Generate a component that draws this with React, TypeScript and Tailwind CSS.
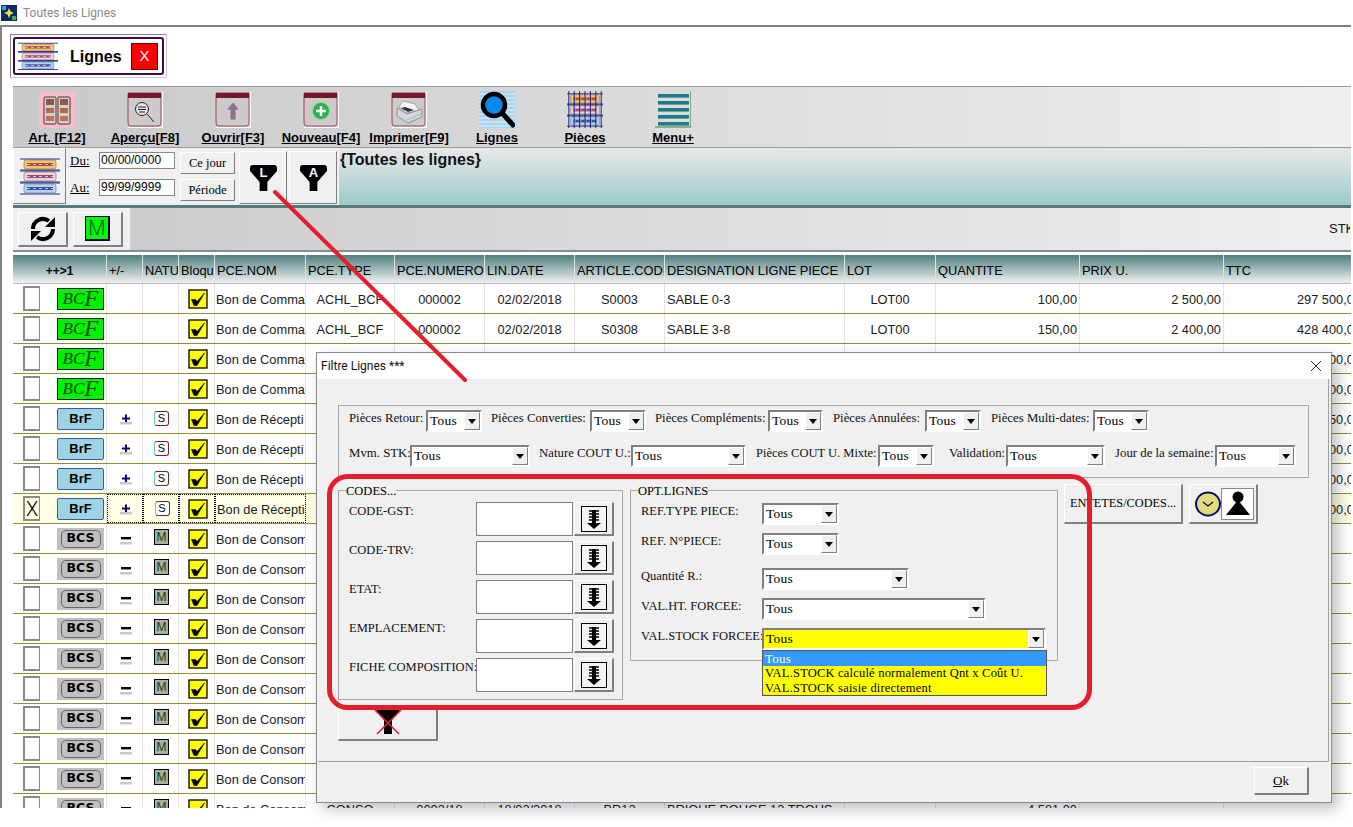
import React from "react";

const raised = "border border-t-white border-l-white border-b-[#808080] border-r-[#808080]";
const sunken = "border-2 border-t-[#808080] border-l-[#808080] border-b-white border-r-white";

function Bars({ w = 40, h = 40, grid = false }: { w?: number; h?: number; grid?: boolean }) {
  const rows = [
    { y: 4, a: "#f6c75a", b: "#a8455a" },
    { y: 16, a: "#f3d2c9", b: "#8f4a86" },
    { y: 28, a: "#a9d8ee", b: "#4a45a5" },
  ];
  return (
    <svg width={w} height={h} viewBox="0 0 40 40" preserveAspectRatio="none">
      {rows.map((r) => (
        <g key={r.y}>
          <rect x="4" y={r.y} width="32" height="9" rx="2" fill={r.a} stroke="#6a6a8a" strokeWidth="0.6" />
          <rect x="7" y={r.y + 3} width="26" height="3" fill={r.b} />
          <line x1="7" x2="33" y1={r.y + 4.5} y2={r.y + 4.5} stroke="#f4e8e8" strokeWidth="0.8" strokeDasharray="3 3" />
          <line x1="0" x2="40" y1={r.y - 1} y2={r.y - 1} stroke="#15157a" strokeWidth="0.9" />
          <line x1="0" x2="40" y1={r.y + 10} y2={r.y + 10} stroke="#15157a" strokeWidth="0.9" />
        </g>
      ))}
      {grid && [2, 8, 14, 20, 26, 32, 38].map((x) => <line key={x} x1={x} x2={x} y1="0" y2="40" stroke="#15157a" strokeWidth="1" />)}
    </svg>
  );
}

function Card({ children }: { children: React.ReactNode }) {
  return (
    <svg width="36" height="36" viewBox="0 0 36 36">
      <path d="M1 1H34V31Q34 34 31 34H4Q1 34 1 31Z" fill="#cfcaca" stroke="#8a2a3a" strokeWidth="0.8" />
      <rect x="1" y="1" width="33" height="5" fill="#701a2c" />
      <path d="M35.5 0V35.5H1" fill="none" stroke="#fff" strokeWidth="1.2" />
      {children}
    </svg>
  );
}

function ArtIcon() {
  return (
    <svg width="36" height="36" viewBox="0 0 36 36">
      <rect width="36" height="36" fill="#f9bccb" />
      {[5, 19].map((x) => (
        <g key={x}>
          <rect x={x} y="5" width="12" height="27" rx="1" fill="#d8d0c8" stroke="#4a3040" strokeWidth="1" />
          <rect x={x + 2} y="7" width="8" height="6" fill="#8a5a50" />
          <rect x={x + 2} y="16" width="8" height="5" fill="#b06a50" />
          <rect x={x + 2} y="24" width="8" height="5" fill="#c0705a" />
        </g>
      ))}
    </svg>
  );
}

function Tool({ label, children }: { label: string; children: React.ReactNode }) {
  return (
    <div className="flex w-[88px] shrink-0 flex-col items-center pt-[4px]">
      <div className="flex h-[37px] w-[37px] items-center justify-center">{children}</div>
      <div className="mt-[2px] whitespace-nowrap text-[13px] leading-[15px] font-bold text-black underline">{label}</div>
    </div>
  );
}

function Funnel({ letter }: { letter: string }) {
  return (
    <svg width="27" height="26" viewBox="0 0 28 26" preserveAspectRatio="none">
      <path d="M3 0H25Q28 0 28 3V6L18 17V26H10V17L0 6V3Q0 0 3 0Z" fill="#000" />
      <text x="14" y="12" textAnchor="middle" fontSize="13.5" fontWeight="bold" fill="#fff" fontFamily="Liberation Sans">{letter}</text>
    </svg>
  );
}

function Combo({ className, value = "Tous", yellow = false }: { className: string; value?: string; yellow?: boolean }) {
  return (
    <div className={`flex h-[22px] shrink-0 items-center ${sunken} ${yellow ? "bg-[#ffff00]" : "bg-white"} ${className}`}>
      <span className="flex-1 pl-[2px] text-[13.5px] leading-[18px] tracking-[0.2px] text-black">{value}</span>
      <span className={`flex h-[18px] w-[16px] items-center justify-center bg-[#f0f0f0] ${raised}`}>
        <svg width="8" height="5" viewBox="0 0 8 5"><path d="M0 0H8L4 5Z" fill="#000" /></svg>
      </span>
    </div>
  );
}

function Lbl({ className, size = "text-[12.5px]", children }: { className: string; size?: string; children: React.ReactNode }) {
  return <div className={`-mt-[1px] shrink-0 whitespace-nowrap leading-[18px] text-[#111] ${size} ${className}`}>{children}</div>;
}

function CodeRow({ label }: { label: string }) {
  return (
    <div className="flex h-[39px] items-start">
      <div className="w-[127px] shrink-0 pt-[1px]"><Lbl className="">{label}</Lbl></div>
      <div className="h-[34px] w-[97px] border border-[#808080] bg-white" />
      <button className={`ml-[1px] flex h-[34px] w-[40px] items-center justify-center bg-[#f0f0f0] border-b-2 border-r-2 ${raised}`}>
        <svg width="26" height="26" viewBox="0 0 26 26">
          <rect x="0.5" y="0.5" width="25" height="25" fill="#f4f4f4" stroke="#000" />
          <path d="M8 5H18M8 8H18M8 11H18M8 14H18" stroke="#000" strokeWidth="1.5" />
          <path d="M11 4H15V17H20L13 23L6 17H11Z" fill="#000" />
        </svg>
      </button>
    </div>
  );
}

function Badge({ type }: { type: string }) {
  if (type === "bcf")
    return (
      <div className="flex h-[22px] w-[47px] items-end justify-center border border-[#002200] bg-[#00f000] text-[17px] italic leading-[20px] text-[#0a4a14] [font-family:'Liberation_Serif',serif]">
        BC<span className="text-[23px] leading-[20px]">F</span>
      </div>
    );
  if (type === "brf")
    return (
      <div className="flex h-[22px] w-[47px] items-center justify-center rounded-[2px] border border-[#3a5aa0] bg-[#9ed3e6] text-[13px] font-bold text-black">BrF</div>
    );
  return (
    <div className="flex h-[22px] w-[47px] items-center justify-center bg-[#c0c0c0]">
      <span className="flex h-[18px] w-[40px] items-center justify-center rounded-[5px] border border-[#666] text-[12.5px] font-bold text-black [font-family:'DejaVu_Sans',sans-serif]">BCS</span>
    </div>
  );
}

function Check() {
  return (
    <svg width="20" height="20" viewBox="0 0 20 20">
      <rect x="1" y="1" width="18" height="18" fill="#ffff00" stroke="#000" strokeWidth="1.3" />
      <path d="M3.5 10.5H7.5L9 12.5L16.5 4L9 16.5H6Z" fill="#000" stroke="#000" strokeWidth="0.6" />
    </svg>
  );
}

const cols = "grid w-[1355px] grid-cols-[94px_36px_36px_36px_91px_89px_90px_90px_90px_180px_91px_144px_144px_144px]";

type Row = { t: string; nom: string; x?: boolean; pt?: string; num?: string; date?: string; art?: string; des?: string; lot?: string; q?: string; p?: string; ttc?: string };
const rows: Row[] = [
  { t: "bcf", nom: "Bon de Comma", pt: "ACHL_BCF", num: "000002", date: "02/02/2018", art: "S0003", des: "SABLE 0-3", lot: "LOT00", q: "100,00", p: "2 500,00", ttc: "297 500,00" },
  { t: "bcf", nom: "Bon de Comma", pt: "ACHL_BCF", num: "000002", date: "02/02/2018", art: "S0308", des: "SABLE 3-8", lot: "LOT00", q: "150,00", p: "2 400,00", ttc: "428 400,00" },
  { t: "bcf", nom: "Bon de Comma", ttc: "500,00" },
  { t: "bcf", nom: "Bon de Comma", ttc: "500,00" },
  { t: "brf", nom: "Bon de Récepti", ttc: "250,00" },
  { t: "brf", nom: "Bon de Récepti", ttc: "300,00" },
  { t: "brf", nom: "Bon de Récepti", ttc: "000,00" },
  { t: "brf", nom: "Bon de Récepti", x: true, ttc: "300,00" },
  ...Array.from({ length: 9 }, () => ({ t: "bcs", nom: "Bon de Consom" })),
  { t: "bcs", nom: "Bon de Consom", pt: "CONSO", num: "0003/18", date: "18/02/2018", art: "BR12", des: "BRIQUE ROUGE 12 TROUS", q: "4 581,00" },
];

function Cell({ className = "", focus, children }: { className?: string; focus?: boolean; children?: React.ReactNode }) {
  return (
    <div className={`flex h-[29px] items-center overflow-hidden whitespace-nowrap ${focus ? "border border-dotted border-black" : "border-r border-[#e4e4e4]"} ${className}`}>
      {children}
    </div>
  );
}

function TableRow({ r }: { r: Row }) {
  return (
    <div className={`${cols} h-[30px] border-b border-[#8f8f35] text-[12.8px] text-[#1a1a1a] ${r.x ? "bg-[#ffffe6]" : "bg-white"}`}>
      <Cell className="pl-[10px]">
        <div className="flex h-[25px] w-[17px] shrink-0 items-center justify-center border-2 border-[#8a8a8a] border-r border-b-[#8a8a8a] text-[20px] font-light leading-none text-black [font-family:Roboto,sans-serif]">
          {r.x ? "X" : ""}
        </div>
        <div className="ml-[17px] shrink-0"><Badge type={r.t} /></div>
      </Cell>
      <Cell className="justify-center pl-[2px]" focus={r.x}>
        {r.t !== "bcf" && (
          <svg width="14" height="14" viewBox="0 0 14 14">
            <rect x="1" y="10" width="12" height="2.5" fill="#c8c8c8" />
            {r.t === "brf" ? <path d="M3 6.5H11M7 2.5V10" stroke="#0a0a6e" strokeWidth="2" /> : <rect x="2" y="5" width="10" height="2.4" fill="#000" />}
          </svg>
        )}
      </Cell>
      <Cell className="justify-center pl-[2px]" focus={r.x}>
        {r.t === "brf" && (
          <div className="flex h-[15px] w-[15px] items-center justify-center rounded-[3px] border border-[#7d1f20] border-l-[#60c8d8] bg-white text-[11px] text-black">S</div>
        )}
        {r.t === "bcs" && (
          <div className="-mt-[4px] flex h-[16px] w-[15px] items-center justify-center border border-black bg-[#a8b0a0] text-[12px] text-[#104010]">M</div>
        )}
      </Cell>
      <Cell className="justify-center pl-[2px]" focus={r.x}><Check /></Cell>
      <Cell className="pl-[1px] pt-[2px]" focus={r.x}>{r.nom}</Cell>
      <Cell className="justify-center pt-[2px]">{r.pt}</Cell>
      <Cell className="justify-center pt-[2px]">{r.num}</Cell>
      <Cell className="justify-center pt-[2px]">{r.date}</Cell>
      <Cell className="justify-center pt-[2px]">{r.art}</Cell>
      <Cell className="pl-[2px] pt-[2px]">{r.des}</Cell>
      <Cell className="justify-center pt-[2px]">{r.lot}</Cell>
      <Cell className="justify-end pr-[2px] pt-[2px]">{r.q}</Cell>
      <Cell className="justify-end pr-[2px] pt-[2px]">{r.p}</Cell>
      <Cell className="justify-end pr-[6px] pt-[2px]">{r.ttc}</Cell>
    </div>
  );
}

export default function App() {
  const head = ["+/-", "NATU", "Bloqu", "PCE.NOM", "PCE.TYPE", "PCE.NUMERO", "LIN.DATE", "ARTICLE.CODI", "DESIGNATION LIGNE PIECE", "LOT", "QUANTITE", "PRIX U.", "TTC"];
  return (
    <div className="relative h-[827px] w-[1353px] overflow-hidden bg-white text-black [font-family:'Liberation_Sans',Arial,sans-serif]">
      {/* caption */}
      <div className="flex h-[25px] items-center pl-[1px]">
        <svg width="16" height="16" viewBox="0 0 16 16">
          <rect width="16" height="16" fill="#0a2a6a" />
          <path d="M8 3L9.5 6.5L13 8L9.5 9.5L8 13L6.5 9.5L3 8L6.5 6.5Z" fill="#f4e23a" />
          <rect x="1" y="1" width="4" height="4" fill="#2fa8d8" /><rect x="11" y="11" width="4" height="4" fill="#38b04a" />
        </svg>
        <span className="ml-[6px] text-[12px] text-[#8a8a8a] [font-family:Roboto,sans-serif]">Toutes les Lignes</span>
      </div>

      {/* window */}
      <div className="h-[783px] w-[1351px] overflow-hidden border-t-2 border-l-2 border-[#808080]">
        <div className="ml-[8px] mt-[7px] h-[44px] w-[157px] border border-[#c8c8c8] border-t-[#888] border-l-[#888] p-[2px]">
          <div className="flex h-[38px] items-center rounded-[3px] border-2 border-[#3a0a4a] pl-[3px]">
            <Bars w={40} h={30} />
            <span className="ml-[12px] w-[61px] pt-[2px] text-[16px] font-bold">Lignes</span>
            <span className="flex h-[27px] w-[27px] items-center justify-center border border-[#600] bg-[#ff0000] pt-[1px] text-[15px] text-white">X</span>
          </div>
        </div>

        <div className="ml-[11px] mt-[8px]">
          {/* toolbar */}
          <div className="flex h-[62px] border-y border-[#999] bg-linear-to-r from-[#c9c9c9] to-[#efefef]">
            <Tool label="Art. [F12]"><ArtIcon /></Tool>
            <Tool label="Aperçu[F8]">
              <Card><circle cx="15" cy="17" r="6.5" fill="#e8e8e8" stroke="#222" /><path d="M11 15H19M11 17.5H19M12 20H18M20 22L27 30" stroke="#222" strokeWidth="1" /></Card>
            </Tool>
            <Tool label="Ouvrir[F3]">
              <Card><path d="M18 10L25 18H21V28H15V18H11Z" fill="#8f7288" stroke="#c8d8e8" strokeWidth="0.8" /></Card>
            </Tool>
            <Tool label="Nouveau[F4]">
              <Card><circle cx="18" cy="19" r="8.5" fill="#2fb04f" stroke="#8fd8a0" /><path d="M18 14V24M13 19H23" stroke="#fff" strokeWidth="2.5" /></Card>
            </Tool>
            <Tool label="Imprimer[F9]">
              <Card>
                <path d="M6 16L16 22L31 17V25L17 31L6 24Z" fill="#d4d8dc" stroke="#666" strokeWidth="0.6" />
                <path d="M12 9L24 12L28 18L16 21L8 15Z" fill="#f4f4f4" stroke="#777" strokeWidth="0.6" />
                <path d="M14 15L23 18L17 20L10 16Z" fill="#333" />
                <path d="M16 28L30 22" stroke="#a8c8d8" strokeWidth="1.5" />
              </Card>
            </Tool>
            <Tool label="Lignes">
              <svg width="36" height="37" viewBox="0 0 36 37">
                <rect width="36" height="37" fill="#a9d4ec" />
                {[3, 7, 11, 15, 19, 23, 27, 31, 35].map((y) => <line key={y} x1="0" x2="36" y1={y} y2={y} stroke="#e4f2fa" />)}
                <circle cx="15" cy="14" r="11" fill="#0a8ae8" stroke="#000" strokeWidth="4.5" />
                <path d="M23 22L34 34" stroke="#000" strokeWidth="5" strokeLinecap="round" />
              </svg>
            </Tool>
            <Tool label="Pièces"><Bars w={36} h={37} grid /></Tool>
            <Tool label="Menu+">
              <svg width="36" height="37" viewBox="0 0 36 37">
                {[3, 10, 17, 24, 31].map((y) => <rect key={y} x="3" y={y} width="31" height="3.6" fill="#1f7a8a" />)}
                <path d="M0 36H36V0" fill="none" stroke="#3a8a3a" strokeWidth="1.2" />
              </svg>
            </Tool>
          </div>

          {/* date row */}
          <div className="flex h-[57px] bg-linear-to-b from-[#e8e8e8] to-[#9ccaca]">
            <div className="flex w-[326px] shrink-0 bg-[#f0f0f0]">
              <div className={`flex h-[56px] w-[53px] shrink-0 items-center justify-center ${raised}`}><Bars w={40} h={40} /></div>
              <div className="flex w-[33px] shrink-0 flex-col gap-[9px] pl-[4px] pt-[4px] text-[13px] leading-[18px] underline [font-family:'Liberation_Serif',serif]">
                <span>Du:</span><span>Au:</span>
              </div>
              <div className="flex w-[81px] shrink-0 flex-col gap-[10px] pt-[4px] text-[12px] leading-[14px]">
                <div className="h-[17px] w-[76px] border border-[#888] bg-white pl-[1px]">00/00/0000</div>
                <div className="h-[17px] w-[76px] border border-[#888] bg-white pl-[1px]">99/99/9999</div>
              </div>
              <div className="flex w-[59px] shrink-0 flex-col gap-[5px] pt-[4px] text-[12.5px] [font-family:'Liberation_Serif',serif]">
                <div className={`flex h-[22px] w-[55px] items-center justify-center ${raised}`}>Ce jour</div>
                <div className={`flex h-[22px] w-[55px] items-center justify-center ${raised}`}>Période</div>
              </div>
              <div className={`mt-[3px] flex h-[53px] w-[48px] shrink-0 items-center justify-center ${raised}`}><Funnel letter="L" /></div>
              <div className={`ml-[2px] mt-[3px] flex h-[53px] w-[48px] shrink-0 items-center justify-center ${raised}`}><Funnel letter="A" /></div>
            </div>
            <div className="pl-[1px] pt-[3px] text-[16px] font-bold leading-[18px] text-[#111]">{"{Toutes les lignes}"}</div>
          </div>
          <div className="h-[3px] bg-[#5a7a7a]" />

          {/* refresh bar */}
          <div className="flex h-[44px] items-center border-b-2 border-[#7f9090] bg-linear-to-r from-[#c9c9c9] to-[#efefef]">
            <div className="flex h-full w-[117px] shrink-0 items-center gap-[5px] bg-[#f0f0f0] pl-[5px]">
              <div className={`flex h-[35px] w-[50px] items-center justify-center ${raised} border-b-2 border-r-2`}>
                <svg width="26" height="28" viewBox="0 0 26 28">
                  <path d="M3 14A10 10 0 0 1 19 6" fill="none" stroke="#000" strokeWidth="4" />
                  <path d="M25 2V12H15Z" fill="#000" />
                  <path d="M23 14A10 10 0 0 1 7 22" fill="none" stroke="#000" strokeWidth="4" />
                  <path d="M1 26V16H11Z" fill="#000" />
                </svg>
              </div>
              <div className={`flex h-[35px] w-[50px] items-center justify-center ${raised} border-b-2 border-r-2`}>
                <span className="flex h-[25px] w-[25px] items-center justify-center border border-[#003] border-b-2 border-r-2 bg-[#00f800] text-[20px] leading-none text-[#053] [font-family:Roboto,sans-serif] font-light">M</span>
              </div>
            </div>
            <span className="ml-auto mr-[1px] w-[21px] overflow-hidden text-[13px] text-[#111]">STK</span>
          </div>

          {/* grid */}
          <div className={`${cols} mt-[3px] h-[29px] border-b border-[#bbb] bg-linear-to-b from-[#4f8080] to-[#f2f2f2] text-[12.8px] text-black`}>
            <div className="flex items-center justify-center border-r border-[#dde4e4] pt-[3px] text-[12px] font-bold">{"++>1"}</div>
            {head.map((h) => (
              <div key={h} className="flex items-center overflow-hidden whitespace-nowrap border-r border-[#dde4e4] pl-[2px] pt-[3px]">{h}</div>
            ))}
          </div>
          {rows.map((r, i) => <TableRow key={i} r={r} />)}
        </div>
      </div>

      {/* dialog */}
      <div className="absolute left-[316px] top-[352px] h-[451px] w-[1016px] border border-[#8a8a8a] bg-[#f0f0f0] shadow-[6px_6px_14px_rgba(0,0,0,0.25)]">
        <div className="flex h-[26px] items-center justify-between bg-white pl-[4px] pr-[9px] text-[12px] text-[#111] [font-family:Roboto,sans-serif]">
          <span>Filtre Lignes ***</span>
          <svg width="12" height="12" viewBox="0 0 12 12"><path d="M1 1L11 11M11 1L1 11" stroke="#222" strokeWidth="1" /></svg>
        </div>
        <div className="ml-[1px] mr-[2px] h-[383px] border-r border-b border-[#a0a0a0] pl-[20px] pt-[26px] [font-family:'Liberation_Serif',serif]">
          <div className="h-[73px] w-[971px] border border-[#a8a8a8] pl-[10px] pt-[4px]">
            <div className="flex h-[22px]">
              <Lbl size="text-[12.8px]" className="w-[77px]">Pièces Retour:</Lbl><Combo className="w-[56px]" />
              <Lbl size="text-[12.8px]" className="ml-[9px] w-[99px]">Pièces Converties:</Lbl><Combo className="w-[56px]" />
              <Lbl size="text-[12.8px]" className="ml-[9px] w-[113px]">Pièces Compléments:</Lbl><Combo className="w-[55px]" />
              <Lbl size="text-[12.8px]" className="ml-[10px] w-[92px]">Pièces Annulées:</Lbl><Combo className="w-[56px]" />
              <Lbl size="text-[12.8px]" className="ml-[10px] w-[102px]">Pièces Multi-dates:</Lbl><Combo className="w-[56px]" />
            </div>
            <div className="mt-[13px] flex h-[22px]">
              <Lbl size="text-[12.8px]" className="w-[61px]">Mvm. STK:</Lbl><Combo className="w-[120px]" />
              <Lbl size="text-[12.8px]" className="ml-[9px] w-[92px]">Nature COUT U.:</Lbl><Combo className="w-[115px]" />
              <Lbl className="ml-[10px] w-[122px]">Pièces COUT U. Mixte:</Lbl><Combo className="w-[56px]" />
              <Lbl size="text-[12.8px]" className="ml-[15px] w-[57px]">Validation:</Lbl><Combo className="w-[99px]" />
              <Lbl size="text-[12.8px]" className="ml-[10px] w-[100px]">Jour de la semaine:</Lbl><Combo className="w-[81px]" />
            </div>
          </div>

          <div className="mt-[6px] flex items-start">
            <div className="mt-[6px] w-[285px] shrink-0">
              <div className="relative h-[210px] border border-[#a8a8a8] pl-[10px] pt-[11px]">
                <span className="absolute left-[7px] top-[-6px] bg-[#f0f0f0] text-[12.5px] leading-[12px]">CODES...</span>
                <CodeRow label="CODE-GST:" />
                <CodeRow label="CODE-TRV:" />
                <CodeRow label="ETAT:" />
                <CodeRow label="EMPLACEMENT:" />
                <CodeRow label="FICHE COMPOSITION:" />
              </div>
              <div className={`mt-[8px] flex h-[33px] w-[100px] items-end justify-center border-b-2 border-r-2 pb-[4px] ${raised}`}>
                <svg width="28" height="26" viewBox="0 0 28 26">
                  <path d="M2 1H26L18 11V25H10V11Z" fill="#000" />
                  <path d="M1 1L25 25M27 1L3 25" stroke="#e51e2b" strokeWidth="1.6" />
                </svg>
              </div>
            </div>

            <div className="relative ml-[7px] mt-[6px] h-[171px] w-[428px] shrink-0 border border-[#a8a8a8] pl-[10px] pt-[12px]">
              <span className="absolute left-[7px] top-[-6px] bg-[#f0f0f0] text-[12.5px] leading-[12px]">OPT.LIGNES</span>
              <div className="flex h-[30px]"><Lbl className="w-[121px]">REF.TYPE PIECE:</Lbl><Combo className="w-[77px]" /></div>
              <div className="flex h-[35px]"><Lbl className="w-[121px]">REF. N°PIECE:</Lbl><Combo className="w-[77px]" /></div>
              <div className="flex h-[30px]"><Lbl className="w-[121px]">Quantité R.:</Lbl><Combo className="w-[147px]" /></div>
              <div className="flex h-[30px]"><Lbl className="w-[121px]">VAL.HT. FORCEE:</Lbl><Combo className="w-[224px]" /></div>
              <div className="flex h-[22px]"><Lbl className="w-[121px]">VAL.STOCK FORCEE:</Lbl><Combo className="w-[284px]" yellow /></div>
              <div className="absolute left-[131px] top-[159px] z-10 h-[46px] w-[285px] border border-[#555] bg-[#ffff00] text-[12.5px] leading-[15px] tracking-[0.2px]">
                <div className="h-[15px] bg-[#3399ff] pl-[2px] text-[13px] text-white">Tous</div>
                <div className="pl-[2px]">VAL.STOCK calculé normalement Qnt x Coût U.</div>
                <div className="pl-[2px]">VAL.STOCK saisie directement</div>
              </div>
            </div>

            <div className={`ml-[6px] flex h-[40px] w-[119px] shrink-0 items-center justify-center whitespace-nowrap border-b-2 border-r-2 text-[12.3px] ${raised}`}>ENTETES/CODES...</div>
            <div className={`ml-[6px] flex h-[40px] w-[69px] shrink-0 items-center justify-between border-b-2 border-r-2 pl-[5px] pr-[2px] ${raised}`}>
              <svg width="26" height="26" viewBox="0 0 26 26">
                <ellipse cx="13" cy="13" rx="12" ry="11.5" fill="#e2dc80" stroke="#0a0a6e" strokeWidth="2" />
                <path d="M8 11L13 15L18 11" fill="none" stroke="#000" strokeWidth="1.2" />
              </svg>
              <div className="flex h-[32px] w-[33px] items-center justify-center border border-[#888] bg-white">
                <svg width="24" height="26" viewBox="0 0 24 26">
                  <circle cx="12" cy="6" r="5.5" fill="#000" />
                  <path d="M12 9L24 24H0Z" fill="#000" />
                </svg>
              </div>
            </div>
          </div>
        </div>
        <div className="flex justify-end pr-[22px] pt-[5px]">
          <div className={`flex h-[28px] w-[55px] items-center justify-center border-b-2 border-r-2 text-[13px] [font-family:'Liberation_Serif',serif] ${raised}`}>
            <span><span className="underline">O</span>k</span>
          </div>
        </div>
      </div>

      {/* red annotations */}
      <svg className="pointer-events-none absolute left-0 top-0 z-20" width="1353" height="827" viewBox="0 0 1353 827">
        <path d="M275 192L465 380" stroke="#e51e2b" strokeWidth="4" strokeLinecap="round" fill="none" />
        <rect x="329.5" y="476.5" width="760" height="231" rx="18" fill="none" stroke="#e51e2b" strokeWidth="5" />
      </svg>
    </div>
  );
}
